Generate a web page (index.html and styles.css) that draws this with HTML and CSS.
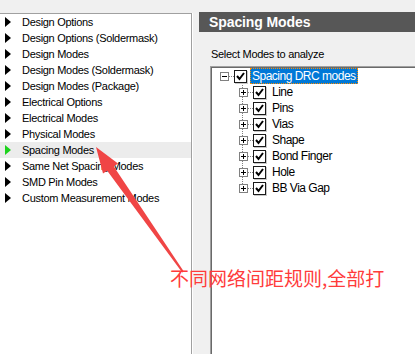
FILE: index.html
```html
<!DOCTYPE html>
<html>
<head>
<meta charset="utf-8">
<link rel="stylesheet" href="styles.css">
</head>
<body>
<div class="app">
  <ul class="list">
    <li class="item"><span class="tri"></span>Design Options</li>
    <li class="item"><span class="tri"></span>Design Options (Soldermask)</li>
    <li class="item"><span class="tri"></span>Design Modes</li>
    <li class="item"><span class="tri"></span>Design Modes (Soldermask)</li>
    <li class="item"><span class="tri"></span>Design Modes (Package)</li>
    <li class="item"><span class="tri"></span>Electrical Options</li>
    <li class="item"><span class="tri"></span>Electrical Modes</li>
    <li class="item"><span class="tri"></span>Physical Modes</li>
    <li class="item active"><span class="tri"></span>Spacing Modes</li>
    <li class="item"><span class="tri"></span>Same Net Spacing Modes</li>
    <li class="item"><span class="tri"></span>SMD Pin Modes</li>
    <li class="item"><span class="tri"></span>Custom Measurement Modes</li>
  </ul>
  <div class="panel">
    <div class="header">Spacing Modes</div>
    <div class="label">Select Modes to analyze</div>
    <div class="treebox">
      <div class="row root">
        <span class="exp minus"></span><span class="hdots"></span>
        <span class="cb"><svg width="11" height="11" viewBox="0 0 11 11"><path d="M2 5 L4.5 8 L9 2" fill="none" stroke="#000" stroke-width="2"/></svg></span>
        <span class="text sel">Spacing DRC modes</span>
      </div>
      <div class="children">
        <div class="row"><span class="exp plus"></span><span class="hdots"></span><span class="cb"><svg width="11" height="11" viewBox="0 0 11 11"><path d="M2 5 L4.5 8 L9 2" fill="none" stroke="#000" stroke-width="2"/></svg></span><span class="text">Line</span></div>
        <div class="row"><span class="exp plus"></span><span class="hdots"></span><span class="cb"><svg width="11" height="11" viewBox="0 0 11 11"><path d="M2 5 L4.5 8 L9 2" fill="none" stroke="#000" stroke-width="2"/></svg></span><span class="text">Pins</span></div>
        <div class="row"><span class="exp plus"></span><span class="hdots"></span><span class="cb"><svg width="11" height="11" viewBox="0 0 11 11"><path d="M2 5 L4.5 8 L9 2" fill="none" stroke="#000" stroke-width="2"/></svg></span><span class="text">Vias</span></div>
        <div class="row"><span class="exp plus"></span><span class="hdots"></span><span class="cb"><svg width="11" height="11" viewBox="0 0 11 11"><path d="M2 5 L4.5 8 L9 2" fill="none" stroke="#000" stroke-width="2"/></svg></span><span class="text">Shape</span></div>
        <div class="row"><span class="exp plus"></span><span class="hdots"></span><span class="cb"><svg width="11" height="11" viewBox="0 0 11 11"><path d="M2 5 L4.5 8 L9 2" fill="none" stroke="#000" stroke-width="2"/></svg></span><span class="text">Bond Finger</span></div>
        <div class="row"><span class="exp plus"></span><span class="hdots"></span><span class="cb"><svg width="11" height="11" viewBox="0 0 11 11"><path d="M2 5 L4.5 8 L9 2" fill="none" stroke="#000" stroke-width="2"/></svg></span><span class="text">Hole</span></div>
        <div class="row last"><span class="exp plus"></span><span class="hdots"></span><span class="cb"><svg width="11" height="11" viewBox="0 0 11 11"><path d="M2 5 L4.5 8 L9 2" fill="none" stroke="#000" stroke-width="2"/></svg></span><span class="text">BB Via Gap</span></div>
      </div>
    </div>
  </div>
</div>
<svg class="arrow" width="415" height="354" viewBox="0 0 415 354">
  <polygon points="96,147 118,163.6 113.8,166.4 183.8,271.4 182.2,272.6 107.2,170.8 103,173.6" fill="#f04545"/>
</svg>
<div class="note">不同网络间距规则,全部打</div>
</body>
</html>
```
FILE: styles.css
```css
html, body {
  margin: 0;
  padding: 0;
  width: 415px;
  height: 354px;
  overflow: hidden;
  background: #f0f0f0;
  font-family: "Liberation Sans", Arial, sans-serif;
  font-size: 11px;
  letter-spacing: -0.3px;
  color: #000;
  position: relative;
}
.app {
  display: flex;
  padding-top: 12px;
  height: 342px;
}
.list {
  list-style: none;
  margin: 1px 0 0 0;
  padding: 0;
  width: 191px;
  background: #fff;
  border-top: 1px solid #a0a0a0;
  border-right: 1px solid #a0a0a0;
  box-shadow: 1px 0 0 #fff;
}
.item {
  height: 16px;
  line-height: 16px;
  display: flex;
  align-items: center;
  white-space: nowrap;
}
.item.active {
  background: #ececec;
}
.tri {
  width: 0;
  height: 0;
  border-top: 5px solid transparent;
  border-bottom: 5px solid transparent;
  border-left: 6px solid #000;
  margin: 0 11px 0 5px;
}
.active .tri {
  border-left-color: #1ed31e;
}
.panel {
  flex: 1;
  margin-left: 7px;
  display: flex;
  flex-direction: column;
}
.header {
  height: 20px;
  line-height: 20px;
  background: #575757;
  color: #fff;
  font-weight: bold;
  font-size: 14px;
  letter-spacing: -0.1px;
  padding-left: 10px;
}
.label {
  margin: 15px 0 0 12px;
  height: 19px;
  line-height: 14px;
}
.treebox {
  flex: 1;
  margin-left: 11px;
  background: #fff;
  border-top: 1px solid #a0a0a0;
  border-left: 1px solid #a0a0a0;
  box-shadow: inset 1px 1px 0 #696969;
  padding-top: 1px;
}
.row {
  display: flex;
  align-items: center;
  height: 16px;
  position: relative;
}
.root {
  padding-left: 9px;
}
.children {
  margin-left: 31px;
  border-left: 1px dotted #808080;
  margin-top: -4px;
  padding-top: 4px;
  height: 108px;
}
.children .row {
  margin-left: -4px;
}
.exp {
  width: 7px;
  height: 7px;
  border: 1px solid #808080;
  background: #fff;
  position: relative;
  flex: none;
}
.exp::before {
  content: "";
  position: absolute;
  left: 1px;
  top: 3px;
  width: 5px;
  height: 1px;
  background: #000;
}
.plus::after {
  content: "";
  position: absolute;
  left: 3px;
  top: 1px;
  width: 1px;
  height: 5px;
  background: #000;
}
.hdots {
  width: 5px;
  border-top: 1px dotted #808080;
  flex: none;
}
.cb {
  width: 11px;
  height: 11px;
  border: 1px solid #1a1a1a;
  box-shadow: 1px 1px 0 #c8c8c8;
  background: #fff;
  flex: none;
  display: flex;
}
.text {
  margin-left: 3px;
  padding: 0 2px;
  height: 16px;
  line-height: 16px;
  white-space: nowrap;
  font-size: 12px;
  letter-spacing: -0.5px;
}
.text.sel {
  background: #0078d7;
  color: #fff;
  outline: 1px dotted #ff8c00;
  outline-offset: -1px;
}
.children .text {
  margin-left: 4px;
}
.arrow {
  position: absolute;
  left: 0;
  top: 0;
  pointer-events: none;
}
.note {
  position: absolute;
  left: 170px;
  top: 266px;
  font-family: "Noto Sans CJK SC", sans-serif;
  font-size: 19px;
  letter-spacing: 0;
  line-height: 24px;
  color: #ff3b3b;
  white-space: nowrap;
}
```
